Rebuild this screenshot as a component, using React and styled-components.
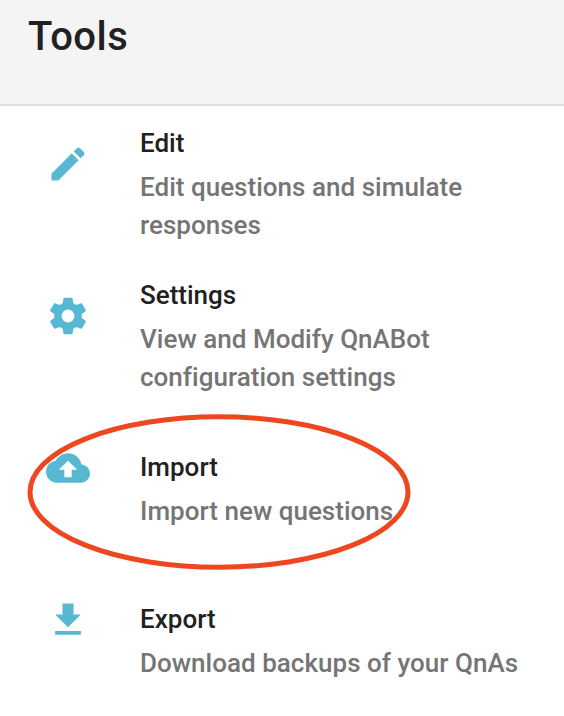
import React from "react";
import styled, { createGlobalStyle } from "styled-components";

const GlobalStyle = createGlobalStyle`
  * { box-sizing: border-box; }
  body { margin: 0; background: #fff; font-family: Roboto, sans-serif; -webkit-font-smoothing: antialiased; }
`;

const Page = styled.main`
  position: relative;
  width: 564px;
  height: 716px;
  overflow: hidden;
  background: #fff;
`;

const Toolbar = styled.header`
  height: 106px;
  padding: 13px 28px 0;
  background: #f4f4f4;
  border-bottom: 2px solid #dedede;
`;

const Title = styled.h1`
  margin: 0;
  font-size: 40px;
  line-height: 48px;
  font-weight: 500;
  letter-spacing: 0.5px;
  color: #212121;
`;

const List = styled.nav`
  display: flex;
  flex-direction: column;
`;

const Item = styled.a`
  display: flex;
  height: ${(p) => p.$height}px;
`;

const IconSlot = styled.span`
  flex: 0 0 140px;
  padding: ${(p) => p.$top}px 0 0 46px;
`;

const Icon = styled.svg`
  display: block;
  width: 44px;
  height: 44px;
  fill: #56b8d3;
`;

const Copy = styled.div`
  flex: 1;
  padding-top: 18px;
  white-space: nowrap;
`;

const Name = styled.h2`
  margin: 0 0 6px;
  font-size: 26px;
  line-height: 38px;
  font-weight: 500;
  color: #212121;
`;

const Description = styled.p`
  margin: 0;
  font-size: 26px;
  line-height: 38px;
  font-weight: 500;
  letter-spacing: 0.02px;
  color: #757575;
`;

const Highlight = styled.svg`
  position: absolute;
  left: 20px;
  top: 406px;
  width: 400px;
  height: 174px;
  fill: none;
  stroke: #ee471f;
  stroke-width: 5;
`;

const tools = [
  {
    name: "Edit", lines: ["Edit questions and simulate", "responses"], height: 152, iconTop: 36,
    path: "M20.71 7.04c.39-.39.39-1.04 0-1.41l-2.34-2.34c-.37-.39-1.02-.39-1.41 0l-1.84 1.83 3.75 3.75M3 17.25V21h3.75L17.81 9.93l-3.75-3.75L3 17.25z",
  },
  {
    name: "Settings", lines: ["View and Modify QnABot", "configuration settings"], height: 172, iconTop: 36,
    path: "M12 15.5A3.5 3.5 0 0 1 8.5 12 3.5 3.5 0 0 1 12 8.5a3.5 3.5 0 0 1 3.5 3.5 3.5 3.5 0 0 1-3.5 3.5m7.43-2.53c.04-.32.07-.64.07-.97 0-.33-.03-.66-.07-1l2.11-1.63c.19-.15.24-.42.12-.64l-2-3.46c-.12-.22-.39-.31-.61-.22l-2.49 1c-.52-.39-1.06-.73-1.69-.98l-.37-2.65A.506.506 0 0 0 14 2h-4c-.25 0-.46.18-.5.42l-.37 2.65c-.63.25-1.17.59-1.69.98l-2.49-1c-.22-.09-.49 0-.61.22l-2 3.46c-.13.22-.07.49.12.64L4.57 11c-.04.34-.07.67-.07 1 0 .33.03.65.07.97l-2.11 1.66c-.19.15-.25.42-.12.64l2 3.46c.12.22.39.3.61.22l2.49-1.01c.52.4 1.06.74 1.69.99l.37 2.65c.04.24.25.42.5.42h4c.25 0 .46-.18.5-.42l.37-2.65c.63-.26 1.17-.59 1.69-.99l2.49 1.01c.22.08.49 0 .61-.22l2-3.46c.12-.22.07-.49-.12-.64l-2.11-1.66z",
  },
  {
    name: "Import", lines: ["Import new questions"], height: 152, iconTop: 16,
    path: "M19.35 10.04C18.67 6.59 15.64 4 12 4 9.11 4 6.6 5.64 5.35 8.04 2.34 8.36 0 10.91 0 14c0 3.31 2.69 6 6 6h13c2.76 0 5-2.24 5-5 0-2.64-2.05-4.78-4.65-4.96zM14 13v4h-4v-4H7l5-5 5 5h-3z",
  },
  {
    name: "Export", lines: ["Download backups of your QnAs"], height: 134, iconTop: 16,
    path: "M5 20h14v-2H5m14-9h-4V3H9v6H5l7 7 7-7z",
  },
];

export default function App() {
  return (
    <>
      <GlobalStyle />
      <Page>
        <Toolbar><Title>Tools</Title></Toolbar>
        <List>
          {tools.map((tool) => (
            <Item key={tool.name} $height={tool.height}>
              <IconSlot $top={tool.iconTop}>
                <Icon viewBox="0 0 24 24"><path d={tool.path} /></Icon>
              </IconSlot>
              <Copy>
                <Name>{tool.name}</Name>
                {tool.lines.map((line) => <Description key={line}>{line}</Description>)}
              </Copy>
            </Item>
          ))}
        </List>
        <Highlight viewBox="0 0 400 174"><ellipse cx="199" cy="86" rx="189" ry="75.2" /></Highlight>
      </Page>
    </>
  );
}
